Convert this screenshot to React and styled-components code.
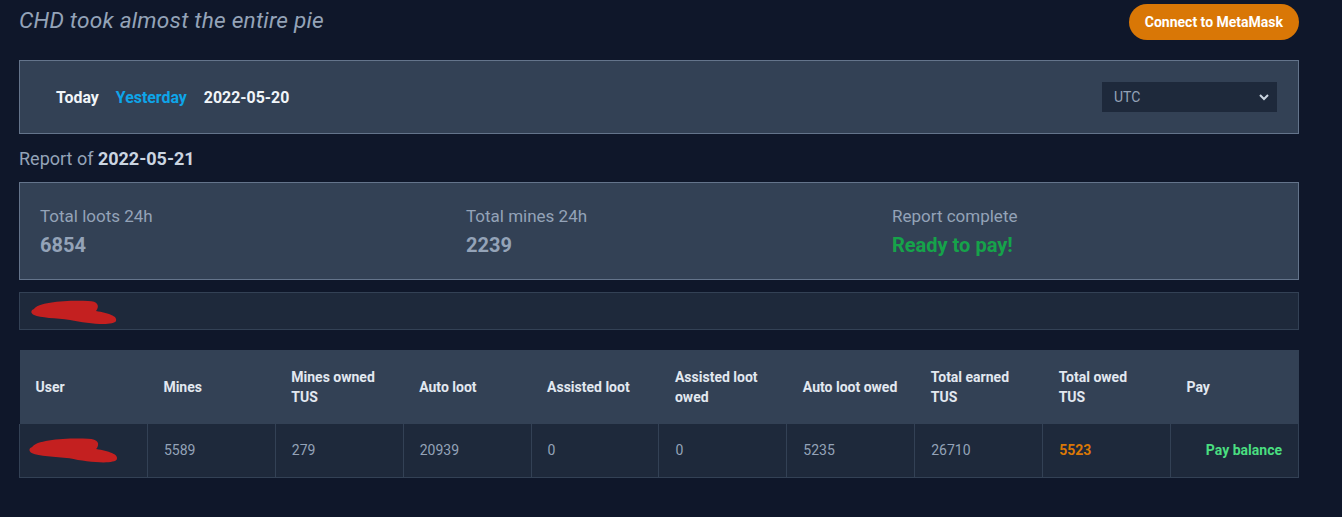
import React from "react";
import styled, { createGlobalStyle } from "styled-components";

const Global = createGlobalStyle`
  html, body { margin: 0; padding: 0; background: #0f172a; }
  body { font-family: Roboto, "Noto Sans", sans-serif; color: #94a3b8; }
  * { box-sizing: border-box; }
`;

const Page = styled.div`
  width: 1342px;
  min-height: 517px;
  padding: 4px 43px 0 19px;
  display: flex;
  flex-direction: column;
`;

const TopBar = styled.div`
  display: flex;
  justify-content: space-between;
  align-items: flex-start;
  height: 56px;
`;

const Title = styled.h1`
  margin: 3px 0 0;
  font-size: 22.7px;
  font-style: italic;
  font-weight: 400;
  color: #94a3b8;
  letter-spacing: 0.2px;
`;

const MetaButton = styled.button`
  height: 36px;
  padding: 0 16px;
  border: none;
  border-radius: 18px;
  background: #d97706;
  color: #fff;
  font-family: Roboto, sans-serif;
  font-weight: 700;
  font-size: 14px;
  cursor: pointer;
`;

const Panel = styled.div`
  background: #334155;
  border: 1px solid #64748b;
`;

const DateBar = styled(Panel)`
  height: 74px;
  display: flex;
  align-items: center;
  justify-content: space-between;
  padding: 0 21px 0 36px;
`;

const DateLinks = styled.div`
  display: flex;
  gap: 17px;
  padding-top: 1px;
`;

const DateLink = styled.span`
  font-size: 15.9px;
  font-weight: 700;
  color: ${(p) => (p.$active ? "#0ea5e9" : "#f1f5f9")};
`;

const SelectBox = styled.div`
  width: 175px;
  height: 30px;
  background: #1e293b;
  display: flex;
  align-items: center;
  justify-content: space-between;
  padding: 0 7px 0 12px;
  font-size: 14px;
  color: #94a3b8;
`;

const ReportLine = styled.div`
  margin: 14px 0 13px;
  font-size: 18px;
  color: #94a3b8;
  b { font-weight: 700; color: #cbd5e1; }
`;

const Stats = styled(Panel)`
  height: 98px;
  display: grid;
  grid-template-columns: 426px 426px 1fr;
  padding: 23px 20px 0;
`;

const Stat = styled.div`
  display: flex;
  flex-direction: column;
  gap: 7px;
`;

const StatLabel = styled.div`
  font-size: 17px;
  color: #94a3b8;
`;

const StatValue = styled.div`
  font-size: 20px;
  font-weight: 700;
  color: ${(p) => p.$color || "#94a3b8"};
`;

const Redacted = styled.div`
  margin-top: 12px;
  height: 38px;
  background: #1e293b;
  border: 1px solid #334155;
  display: flex;
  align-items: center;
  padding-left: 8px;
`;

const Table = styled.table`
  margin-top: 20px;
  width: 1280px;
  border-collapse: collapse;
  table-layout: fixed;
`;

const Th = styled.th`
  background: #334155;
  height: 74px;
  padding: 0 16px;
  text-align: left;
  font-size: 14px;
  font-weight: 700;
  line-height: 20px;
  color: #e2e8f0;
  vertical-align: middle;
`;

const Td = styled.td`
  background: #1e293b;
  height: 53px;
  padding: 0 16px;
  border: 1px solid #334155;
  border-top: none;
  font-size: 14px;
  color: ${(p) => p.$color || "#94a3b8"};
  font-weight: ${(p) => (p.$bold ? 700 : 400)};
  text-align: ${(p) => p.$align || "left"};
`;

const Scribble = ({ w = 92, h = 30 }) => (
  <svg width={w} height={h} viewBox="0 0 92 30">
    <path
      d="M6 13 C 10 6, 40 4, 60 5 C 70 5, 72 10, 68 15 C 80 17, 90 20, 88 25 C 86 30, 60 28, 42 24 C 28 22, 12 22, 6 19 C 2 17, 3 14, 6 13 Z"
      fill="#c42020"
    />
  </svg>
);

const headers = [
  "User",
  "Mines",
  "Mines owned TUS",
  "Auto loot",
  "Assisted loot",
  "Assisted loot owed",
  "Auto loot owed",
  "Total earned TUS",
  "Total owed TUS",
  "Pay",
];

const row = ["5589", "279", "20939", "0", "0", "5235", "26710"];

export default function App() {
  return (
    <>
      <Global />
      <Page>
        <TopBar>
          <Title>CHD took almost the entire pie</Title>
          <MetaButton>Connect to MetaMask</MetaButton>
        </TopBar>

        <DateBar>
          <DateLinks>
            <DateLink>Today</DateLink>
            <DateLink $active>Yesterday</DateLink>
            <DateLink>2022-05-20</DateLink>
          </DateLinks>
          <SelectBox>
            <span>UTC</span>
            <svg width="12" height="12" viewBox="0 0 12 12">
              <path d="M2 4 L6 8 L10 4" stroke="#cbd5e1" strokeWidth="2" fill="none" />
            </svg>
          </SelectBox>
        </DateBar>

        <ReportLine>
          Report of <b>2022-05-21</b>
        </ReportLine>

        <Stats>
          <Stat>
            <StatLabel>Total loots 24h</StatLabel>
            <StatValue>6854</StatValue>
          </Stat>
          <Stat>
            <StatLabel>Total mines 24h</StatLabel>
            <StatValue>2239</StatValue>
          </Stat>
          <Stat>
            <StatLabel>Report complete</StatLabel>
            <StatValue $color="#16a34a">Ready to pay!</StatValue>
          </Stat>
        </Stats>

        <Redacted>
          <Scribble w={92} h={30} />
        </Redacted>

        <Table>
          <thead>
            <tr>
              {headers.map((h) => (
                <Th key={h}>{h}</Th>
              ))}
            </tr>
          </thead>
          <tbody>
            <tr>
              <Td style={{ paddingLeft: 6 }}>
                <Scribble w={95} h={32} />
              </Td>
              {row.map((v, i) => (
                <Td key={i}>{v}</Td>
              ))}
              <Td $color="#d97706" $bold>5523</Td>
              <Td $color="#4ade80" $bold $align="right">Pay balance</Td>
            </tr>
          </tbody>
        </Table>
      </Page>
    </>
  );
}
